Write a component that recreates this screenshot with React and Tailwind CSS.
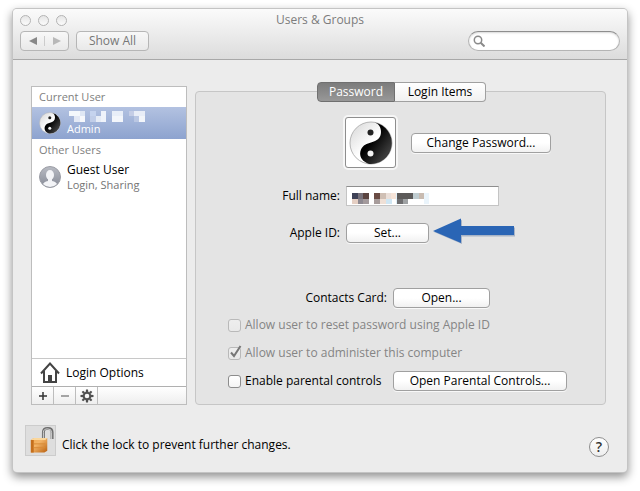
import clsx from "clsx";

const sidebarBlocks = [
  [0, 0, 11, 5, "#f4f8fc"],
  [11, 0, 5, 5, "#dfe7f4"],
  [5, 5, 6, 6, "#e3e9f5"],
  [11, 5, 5, 6, "#f6f8fc"],
  [21, 0, 6, 5, "#c5d3ee"],
  [27, 5, 5, 6, "#e6ecf6"],
  [21, 5, 6, 6, "#c0cde8"],
  [32, 0, 5, 11, "#eff3fa"],
  [43, 0, 11, 5, "#e8eef8"],
  [43, 5, 11, 6, "#f3f6fb"],
  [60, 0, 5, 5, "#c4cde6"],
  [65, 0, 11, 5, "#e8edf7"],
  [70, 5, 6, 6, "#f2f5fa"],
  [65, 5, 5, 6, "#bac7e3"],
];

const nameBlocks = [
  [0, 0, 6, 6, "#3f4257"],
  [6, 0, 5, 6, "#77717a"],
  [11, 0, 6, 6, "#5b4440"],
  [0, 6, 6, 5, "#e5cfc3"],
  [6, 6, 5, 5, "#8d8890"],
  [11, 6, 6, 5, "#a39a9c"],
  [22, 0, 6, 6, "#6a4c44"],
  [28, 0, 6, 6, "#cfbfb4"],
  [22, 6, 6, 5, "#a79c9b"],
  [28, 6, 6, 5, "#efe0d6"],
  [34, 0, 5, 6, "#eadfd9"],
  [39, 0, 5, 6, "#f6e4d8"],
  [34, 6, 6, 5, "#cfe6f3"],
  [44, 0, 1, 11, "#dfeff8"],
  [45, 0, 16, 6, "#5c5a59"],
  [45, 6, 6, 5, "#6e6e70"],
  [51, 6, 5, 5, "#9fa2a4"],
  [61, 0, 6, 6, "#bfccd0"],
  [67, 0, 5, 6, "#c8bbb1"],
  [72, 0, 5, 11, "#eaf4fb"],
];

function Mosaic({ blocks, className }) {
  return (
    <svg viewBox="0 0 84 11" width="84" height="11" shapeRendering="crispEdges" className={className} aria-hidden="true">
      {blocks.map(([x, y, w, h, fill]) => (
        <rect key={`${x}-${y}`} x={x} y={y} width={w} height={h} fill={fill} />
      ))}
    </svg>
  );
}

function YinYang({ size, id }) {
  return (
    <svg viewBox="0 0 44 44" width={size} height={size} className="shrink-0" aria-hidden="true">
      <defs>
        <linearGradient id={`${id}-light`} x1="0" y1="0" x2="1" y2="1">
          <stop offset="0" stopColor="#d4d4d4" />
          <stop offset="0.5" stopColor="#ffffff" />
        </linearGradient>
        <linearGradient id={`${id}-dark`} x1="0" y1="0" x2="1" y2="1">
          <stop offset="0.4" stopColor="#000000" />
          <stop offset="0.8" stopColor="#3c3c3c" />
          <stop offset="1" stopColor="#000000" />
        </linearGradient>
      </defs>
      <circle cx="22" cy="22" r="21" fill={`url(#${id}-light)`} stroke="#b5b5b5" strokeWidth="1" />
      <path
        d="M26 1.4A21 21 0 0 1 20 42.9C11 40 10 33 12 28.5C14 24 18 22.5 22 21.5C28 20 32 17 32 11C32 6.5 30 3 26 1.4Z"
        fill={`url(#${id}-dark)`}
      />
      <circle cx="21.5" cy="11.5" r="3" fill="#222222" />
      <circle cx="21.5" cy="32.5" r="3" fill="#f5f5f5" />
    </svg>
  );
}

function PushButton({ className, children }) {
  return (
    <button
      type="button"
      className={clsx(
        "h-5 shrink-0 rounded border border-[#a0a0a0] bg-linear-to-b from-white from-50% to-[#f1f1f1] text-center text-xs leading-4 whitespace-nowrap text-black shadow-[0_1px_0_#f8f8f8]",
        className
      )}
    >
      {children}
    </button>
  );
}

function CheckOption({ checked, disabled, children }) {
  return (
    <label className={clsx("flex h-5 items-center gap-1 text-xs whitespace-nowrap", disabled ? "text-[#858585]" : "text-black")}>
      <span className="grid size-[13px] shrink-0">
        <input
          type="checkbox"
          defaultChecked={checked}
          disabled={disabled}
          className="col-start-1 row-start-1 size-[13px] appearance-none rounded-[3px] border border-[#8c8c8c] bg-linear-to-b from-white to-[#f4f4f4] disabled:border-[#b9b9b9] disabled:from-[#eeeeee] disabled:to-[#e9e9e9]"
        />
        {checked && (
          <svg viewBox="0 0 13 13" className="pointer-events-none col-start-1 row-start-1 size-[13px] overflow-visible" aria-hidden="true">
            <path d="M3 5.5L6 9L12.5 -1" fill="none" stroke="#777777" strokeWidth="2" />
          </svg>
        )}
      </span>
      {children}
    </label>
  );
}

function TitleBar() {
  return (
    <header className="h-[51px] rounded-t border-b border-[#a8a8a8] bg-linear-to-b from-[#fbfbfb] to-[#dcdcdc] px-[7px]">
      <div className="grid h-[22px] grid-cols-[1fr_auto_1fr] items-center">
        <div className="flex gap-[7px]">
          {["Close", "Minimize", "Zoom"].map((name) => (
            <button
              key={name}
              type="button"
              aria-label={name}
              className="size-[11px] rounded-full border border-[#b4b4b4] bg-linear-to-b from-[#e6e6e6] to-[#fbfbfb]"
            />
          ))}
        </div>
        <h1 className="text-xs text-[#7c7c7c]">Users &amp; Groups</h1>
      </div>
      <div className="flex items-center gap-[7px]">
        <div className="flex h-5 w-[49px] rounded border border-[#b6b6b6] bg-linear-to-b from-[#f8f8f8] to-[#e9e9e9]">
          <button type="button" aria-label="Back" className="my-1 flex flex-1 items-center justify-center border-r border-[#cccccc]">
            <svg viewBox="0 0 8 8" className="size-2" aria-hidden="true">
              <path d="M8 0V8L0 4Z" fill="#888888" />
            </svg>
          </button>
          <button type="button" aria-label="Forward" className="flex flex-1 items-center justify-center">
            <svg viewBox="0 0 8 8" className="size-2" aria-hidden="true">
              <path d="M0 0V8L8 4Z" fill="#b8b8b8" />
            </svg>
          </button>
        </div>
        <button
          type="button"
          className="h-5 w-[73px] rounded border border-[#b6b6b6] bg-linear-to-b from-[#f8f8f8] to-[#e9e9e9] text-xs leading-4 text-[#777777]"
        >
          Show All
        </button>
        <label className="ml-auto flex h-5 w-[152px] items-center rounded-full border border-[#b4b4b4] border-t-[#8e8e8e] bg-white px-1 shadow-[inset_0_1px_2px_#d8d8d8]">
          <svg viewBox="0 0 12 12" className="size-3 shrink-0" fill="none" stroke="#8a8a8a" aria-hidden="true">
            <circle cx="5" cy="5" r="3.7" strokeWidth="1.5" />
            <path d="M7.7 7.7L11.5 11.5" strokeWidth="2" />
          </svg>
          <input type="search" aria-label="Search" className="w-full bg-transparent px-1 text-xs outline-none" />
        </label>
      </div>
    </header>
  );
}

const gearTeeth = [0, 45, 90, 135, 180, 225, 270, 315];

function GearIcon() {
  return (
    <svg viewBox="0 0 14 14" className="size-3.5" aria-hidden="true">
      {gearTeeth.map((angle) => (
        <path key={angle} d="M6 0.5H8L8.3 3H5.7Z" fill="#505050" transform={`rotate(${angle} 7 7)`} />
      ))}
      <circle cx="7" cy="7" r="3.3" fill="none" stroke="#505050" strokeWidth="2" />
    </svg>
  );
}

function Sidebar() {
  return (
    <aside className="flex w-[156px] shrink-0 flex-col border border-[#bdbdbd] bg-white">
      <h2 className="h-5 pl-[7px] text-[11px] leading-5 text-[#808080]">Current User</h2>
      <button type="button" className="flex h-8 items-center gap-1.5 bg-linear-to-b from-[#b3c2e1] to-[#8da3cf] pl-[7px] text-left">
        <YinYang size={22} id="row" />
        <span className="flex flex-col">
          <Mosaic blocks={sidebarBlocks} className="ml-0.5" />
          <span className="text-[11px] leading-[14px] text-white">Admin</span>
        </span>
      </button>
      <h2 className="h-[22px] pl-[7px] text-[11px] leading-[22px] text-[#808080]">Other Users</h2>
      <button type="button" className="flex h-8 items-center gap-1.5 pl-[7px] text-left">
        <svg viewBox="0 0 22 22" className="size-[22px] shrink-0" aria-hidden="true">
          <defs>
            <linearGradient id="guest" x1="0" y1="0" x2="0" y2="1">
              <stop offset="0" stopColor="#b9bcc4" />
              <stop offset="1" stopColor="#868a96" />
            </linearGradient>
            <clipPath id="guest-clip">
              <circle cx="11" cy="11" r="10" />
            </clipPath>
          </defs>
          <circle cx="11" cy="11" r="10.5" fill="url(#guest)" stroke="#9b9da5" />
          <g fill="#f3f4f7" clipPath="url(#guest-clip)">
            <ellipse cx="11" cy="9" rx="4" ry="5" />
            <path d="M9 12H13V15C16 15.5 18 17 19 20V22H3V20C4 17 6 15.5 9 15Z" />
          </g>
        </svg>
        <span className="flex flex-col">
          <span className="text-xs leading-4 text-black">Guest User</span>
          <span className="text-[11px] leading-[14px] text-[#757575]">Login, Sharing</span>
        </span>
      </button>
      <button type="button" className="mt-auto flex h-7 items-center gap-1.5 border-t border-[#c8c8c8] pl-2 text-xs text-black">
        <svg viewBox="0 0 20 21" className="h-[21px] w-5" fill="none" stroke="#444444" strokeWidth="2" aria-hidden="true">
          <path d="M1 11.5L10 1.5L19 11.5" />
          <path d="M4 9V20H16V9" />
          <path d="M8 13H12V19H8Z" fill="#444444" stroke="none" />
        </svg>
        Login Options
      </button>
      <div className="flex h-[18px] border-t border-[#b0b0b0] bg-linear-to-b from-white to-[#eeeeee]">
        <button type="button" aria-label="Add user" className="flex w-[22px] items-center justify-center border-r border-[#bdbdbd]">
          <svg viewBox="0 0 8 8" className="size-2" stroke="#333333" strokeWidth="1.5" aria-hidden="true">
            <path d="M0 4H8M4 0V8" />
          </svg>
        </button>
        <button type="button" aria-label="Remove user" className="flex w-[22px] items-center justify-center border-r border-[#bdbdbd]">
          <svg viewBox="0 0 8 8" className="size-2" stroke="#888888" strokeWidth="1.5" aria-hidden="true">
            <path d="M0 4H8" />
          </svg>
        </button>
        <button type="button" aria-label="Actions" className="flex w-[22px] items-center justify-center border-r border-[#bdbdbd]">
          <GearIcon />
        </button>
      </div>
    </aside>
  );
}

function UserPanel() {
  return (
    <section className="mt-[5px] flex-1 rounded border border-[#c6c6c6] bg-[#e4e4e4] pb-[13px]">
      <div className="-mt-2.5 flex justify-center pl-0.5" role="tablist">
        <button
          type="button"
          role="tab"
          aria-selected="true"
          className="h-5 w-[78px] rounded-l border border-[#707070] bg-linear-to-b from-[#7c7c7c] to-[#989898] text-xs leading-4 text-white"
        >
          Password
        </button>
        <button
          type="button"
          role="tab"
          aria-selected="false"
          className="h-5 w-[91px] rounded-r border border-l-0 border-[#a0a0a0] bg-linear-to-b from-white to-[#f1f1f1] text-xs leading-4 text-black"
        >
          Login Items
        </button>
      </div>
      <div className="mx-auto max-w-[410px] pt-[13px]">
        <div className="flex items-center gap-[13px] pl-[147px]">
          <button type="button" aria-label="User picture" className="rounded-[5px] border-2 border-[#f6f6f6]">
            <span className="flex size-[51px] items-center justify-center rounded-[3px] border border-[#8e8e8e] bg-white">
              <YinYang size={44} id="picture" />
            </span>
          </button>
          <PushButton className="w-[140px]">Change Password...</PushButton>
        </div>
        <div className="mt-4 flex items-center gap-1.5">
          <label htmlFor="full-name" className="w-[144px] text-right text-xs">
            Full name:
          </label>
          <div className="relative">
            <input
              id="full-name"
              type="text"
              className="block h-5 w-[153px] border border-[#c4c4c4] border-t-[#8e8e8e] bg-white px-1 text-xs outline-none"
            />
            <Mosaic blocks={nameBlocks} className="pointer-events-none absolute top-[7px] left-1.5" />
          </div>
        </div>
        <div className="mt-3 flex items-center">
          <span className="mr-1.5 w-[144px] text-right text-xs">Apple ID:</span>
          <PushButton className="w-[83px]">Set...</PushButton>
          <svg viewBox="0 0 82 26" className="mb-1 ml-1 h-[26px] w-[82px]" aria-hidden="true">
            <path d="M1 14L29 2V9.5H82V18.5H29V26Z" fill="#a8b4c6" />
            <path d="M0 13L28 0.5V8H81V17H28V25Z" fill="#2a65b5" />
          </svg>
        </div>
        <div className="mt-10 flex items-center gap-1.5">
          <span className="w-[191px] text-right text-xs">Contacts Card:</span>
          <PushButton className="w-[97px]">Open...</PushButton>
        </div>
        <div className="mt-[7px] flex flex-col gap-2 pl-8">
          <CheckOption disabled>Allow user to reset password using Apple ID</CheckOption>
          <CheckOption checked disabled>
            Allow user to administer this computer
          </CheckOption>
        </div>
        <div className="mt-2 flex items-center justify-between pr-[38px] pl-8">
          <CheckOption>Enable parental controls</CheckOption>
          <PushButton className="w-[174px]">Open Parental Controls...</PushButton>
        </div>
      </div>
    </section>
  );
}

function Footer() {
  return (
    <footer className="flex items-center pt-[18px] pr-[18px] pb-[15px] pl-3">
      <button type="button" aria-label="Lock" className="flex size-[31px] items-center justify-center border border-[#cccccc] bg-[#dedede]">
        <svg viewBox="0 0 30 30" className="size-[30px]" aria-hidden="true">
          <defs>
            <linearGradient id="brass" x1="0" y1="0" x2="1" y2="1">
              <stop offset="0" stopColor="#f0a850" />
              <stop offset="0.4" stopColor="#f3b467" />
              <stop offset="1" stopColor="#b9600f" />
            </linearGradient>
          </defs>
          <path d="M18 14V7Q18 3 22.5 3Q27 3 27 7V14" fill="none" stroke="#6d6d6d" strokeWidth="3" />
          <path d="M18 14V7Q18 3.5 22.5 3.5Q26.5 3.5 26.5 7V14" fill="none" stroke="#d6d6d6" strokeWidth="1" />
          <path d="M5 15L8 13H22V26L19 28H5Z" fill="url(#brass)" />
          <path d="M5 15L8 13H22L20 15Z" fill="#fbd79c" />
          <path d="M5 15H8V28H5Z" fill="#c56f1c" />
          <path d="M8 19H20M8 23H20" stroke="#d98a35" strokeWidth="1" />
        </svg>
      </button>
      <p className="mt-2.5 pl-1.5 text-xs">Click the lock to prevent further changes.</p>
      <button
        type="button"
        aria-label="Help"
        className="mt-3.5 ml-auto size-5 rounded-full border border-[#8e8e8e] bg-linear-to-b from-white to-[#eeeeee] text-center text-sm leading-[18px] font-semibold text-[#333333]"
      >
        ?
      </button>
    </footer>
  );
}

export default function App() {
  return (
    <div className="min-h-screen bg-white px-[13px] pt-[9px] pb-4 font-['Open_Sans','Noto_Sans',sans-serif]">
      <main className="rounded bg-[#ececec] shadow-[0_0_0_1px_#c4c4c4,0_4px_10px_1px_#00000070]">
        <TitleBar />
        <div className="flex gap-2 pt-[26px] pr-[21px] pl-[18px]">
          <Sidebar />
          <UserPanel />
        </div>
        <Footer />
      </main>
    </div>
  );
}
